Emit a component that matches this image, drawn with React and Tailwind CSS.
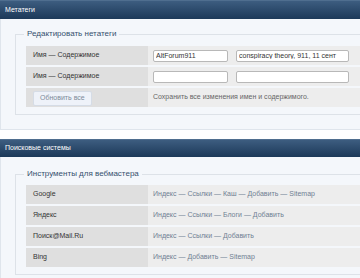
import React from 'react';

const metaRows = [
  { label: 'Имя — Содержимое', name: 'AltForum911', content: 'conspiracy theory, 911, 11 сент' },
  { label: 'Имя — Содержимое', name: '', content: '' }
];

const engines = [
  { name: 'Google', links: ['Индекс', 'Ссылки', 'Каш', 'Добавить', 'Sitemap'] },
  { name: 'Яндекс', links: ['Индекс', 'Ссылки', 'Блоги', 'Добавить'] },
  { name: 'Поиск@Mail.Ru', links: ['Индекс', 'Ссылки', 'Добавить'] },
  { name: 'Bing', links: ['Индекс', 'Добавить', 'Sitemap'] }
];

function Header({ title, h }) {
  return (
    <div className={`${h} flex items-center pl-[5px] text-[7px] text-white bg-gradient-to-b from-[#3d5d80] to-[#1c3959] border-t border-[#4f6e8f]`}>
      {title}
    </div>
  );
}

function Row({ label, children }) {
  return (
    <div className="flex h-[19px]">
      <div className="w-[122px] shrink-0 bg-[#dfdfdf] pl-[7px] flex items-center text-[7px] text-[#333]">{label}</div>
      <div className="flex-1 bg-[#ededed] pl-[5px] flex items-center gap-[8px] text-[7px] text-[#707f93]">{children}</div>
    </div>
  );
}

export default function App() {
  return (
    <div className="w-[360px] h-[278px] overflow-hidden bg-white font-['Liberation_Sans',Arial,sans-serif]">
      <div className="w-[420px]">
        <Header title="Метатеги" h="h-[19px]" />
        <div className="bg-[#f4f7fb] border-l border-b border-[#dfe5ec] pl-[14px] pt-[9px] pb-[14px]">
          <fieldset className="border border-[#dde2e8] pl-[10px] pt-[6px] pb-[7px] m-0 min-w-0">
            <legend className="-ml-[2px] px-[3px] text-[8px] leading-[12px] text-[#34506e]">Редактировать нетатеги</legend>
            <div className="flex flex-col gap-[2px]">
              {metaRows.map((r, i) => (
                <Row key={i} label={r.label}>
                  <input readOnly value={r.name} className="w-[75px] h-[12px] border border-[#b8b8b8] rounded-[2px] bg-white px-[2px] text-[7px] text-[#333] outline-none" />
                  <input readOnly value={r.content} className="w-[113px] h-[12px] border border-[#b8b8b8] rounded-[2px] bg-white px-[2px] text-[7px] text-[#333] outline-none" />
                </Row>
              ))}
              <Row label={
                <button className="h-[15px] px-[6px] mt-[2px] bg-[#eef2f9] border border-[#d5dce6] rounded-[2px] text-[7px] text-[#7d8b9a]">Обновить все</button>
              }>
                <span className="text-[#666]">Сохранить все изменения имен и содержимого.</span>
              </Row>
            </div>
          </fieldset>
        </div>
        <div className="h-[9px]" />
        <Header title="Поисковые системы" h="h-[18px]" />
        <div className="bg-[#f4f7fb] border-l border-b border-[#dfe5ec] pl-[14px] pt-[11px] pb-[14px]">
          <fieldset className="border border-[#dde2e8] pl-[10px] pt-[5px] pb-[7px] m-0 min-w-0">
            <legend className="-ml-[2px] px-[3px] text-[8px] leading-[12px] text-[#34506e]">Инструменты для вебмастера</legend>
            <div className="flex flex-col gap-[2px]">
              {engines.map((e) => (
                <Row key={e.name} label={e.name}>
                  <span>{e.links.join(' — ')}</span>
                </Row>
              ))}
            </div>
          </fieldset>
        </div>
      </div>
    </div>
  );
}
